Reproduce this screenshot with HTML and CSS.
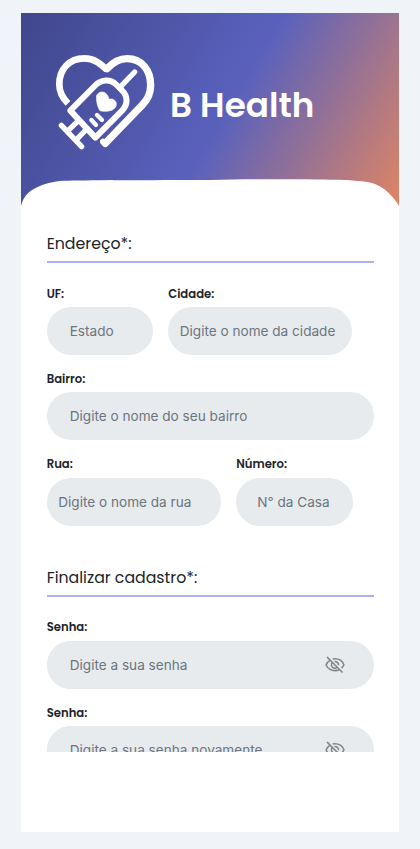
FILE: index.html
```html
<!DOCTYPE html>
<html lang="pt-BR">
<head>
<meta charset="utf-8">
<meta name="viewport" content="width=device-width, initial-scale=1">
<title>B Health</title>
<link rel="stylesheet" href="styles.css">
</head>
<body>
<main class="screen">
  <header class="hero">
    <div class="brand">
      <svg class="logo" viewBox="42 36 306 296" fill="none" stroke="#fff" stroke-linecap="round" stroke-linejoin="round" aria-hidden="true">
        <path stroke-width="20" stroke-linecap="butt" d="M84 190C69 175 58 158 58 134C57 88 88 55 133 55C164 55 184 73 201 90"/>
        <path stroke-width="22" d="M201 86C220 66 239 56 261 56C307 56 332 92 332 136C332 161 321 181 308 194L196 310"/>
        <path stroke-width="18" d="M189 305L196 312"/>
        <path stroke-width="18" d="M91 212L164 138C185 117 212 117 230 135L246 151C264 168 264 194 247 211L166 293Z"/>
        <path stroke-width="16" d="M239 143L284 96M64 256L125 320M113 244L88 268M137 270L113 295"/>
        <path stroke-width="13" d="M154 240L168 255M171 225L186 240"/>
        <path fill="#fff" stroke-width="2" d="M170 168C173 154 192 152 200 163C205 169 206 174 207 178C220 174 230 183 229 194C228 203 220 210 210 212C199 215 189 214 180 212C174 203 168 186 170 168Z"/>
      </svg>
      <h1 class="name">B Health</h1>
    </div>
    <svg class="curve" viewBox="0 0 378 30" aria-hidden="true">
      <path fill="#fff" d="M0 30V27C2 19 6 14 11 11C19 6 29 3 39 2C58 1 100 1.3 190 1C230 0 290 0 325 1C337 2 346 2 354 5C364 9 372 17 378 27V30Z"/>
    </svg>
  </header>

  <form class="form">
    <section class="group">
      <h2 class="title">Endereço*:</h2>
      <div class="row">
        <label class="field uf"><span class="label">UF:</span><input type="text" placeholder="Estado"></label>
        <label class="field city snug"><span class="label">Cidade:</span><input type="text" placeholder="Digite o nome da cidade"></label>
      </div>
      <label class="field"><span class="label">Bairro:</span><input type="text" placeholder="Digite o nome do seu bairro"></label>
      <div class="row">
        <label class="field street snug"><span class="label">Rua:</span><input type="text" placeholder="Digite o nome da rua"></label>
        <label class="field number"><span class="label">Número:</span><input type="text" placeholder="N° da Casa"></label>
      </div>
    </section>
    <section class="group">
      <h2 class="title">Finalizar cadastro*:</h2>
      <label class="field"><span class="label">Senha:</span>
        <span class="password"><input type="text" placeholder="Digite a sua senha">
          <svg class="eye" viewBox="0 0 20 18"><path d="M5.4 4.1C3.4 5.1 1.9 6.7 1.1 9C2.7 12.5 6 14.6 10 14.6C11.8 14.6 13.2 14.2 14.5 13.5M7.7 3.1C8.4 2.9 9.2 2.8 10 2.8C14.1 2.8 17.4 5.2 18.9 8.7C18.3 10.1 17.5 11.2 16.5 12.1M7.2 6.4C6 8 6.3 10.2 7.7 11.3C9 12.4 10.8 12.4 12.1 11.4M9.5 5.5C11.7 5.2 13.7 7 13.5 9.2M2 1L17.5 16.5"/></svg>
        </span>
      </label>
      <label class="field"><span class="label">Senha:</span>
        <span class="password"><input type="text" placeholder="Digite a sua senha novamente">
          <svg class="eye" viewBox="0 0 20 18"><path d="M5.4 4.1C3.4 5.1 1.9 6.7 1.1 9C2.7 12.5 6 14.6 10 14.6C11.8 14.6 13.2 14.2 14.5 13.5M7.7 3.1C8.4 2.9 9.2 2.8 10 2.8C14.1 2.8 17.4 5.2 18.9 8.7C18.3 10.1 17.5 11.2 16.5 12.1M7.2 6.4C6 8 6.3 10.2 7.7 11.3C9 12.4 10.8 12.4 12.1 11.4M9.5 5.5C11.7 5.2 13.7 7 13.5 9.2M2 1L17.5 16.5"/></svg>
        </span>
      </label>
    </section>
  </form>
</main>
</body>
</html>
```
FILE: styles.css
```css
* { box-sizing: border-box; }
body {
  margin: 0;
  height: 849px;
  overflow: hidden;
  padding: 13px 21px 17px;
  background: #f0f4f9;
  color: #202429;
  font-family: Poppins, Inter, sans-serif;
}
.screen { height: 819px; background: #fff; }
.hero {
  height: 195px;
  display: flex;
  flex-direction: column;
  justify-content: space-between;
  background: linear-gradient(120deg, #40478c 0%, #5961bd 53.5%, #e08563 100%);
}
.brand { display: flex; padding: 39px 0 0 33px; }
.logo { width: 102px; height: 98.67px; flex: none; }
.name {
  margin: 30px 0 0 14px;
  color: #fff;
  font-size: 34.2px;
  line-height: 46px;
  font-weight: 600;
  white-space: nowrap;
}
.curve { display: block; width: 378px; height: 30px; margin-bottom: -1px; }
.form { height: 544px; padding: 21px 25px 0 25.7px; overflow: hidden; }
.group { display: flow-root; }
.group + .group { margin-top: 37px; }
.title {
  height: 34px;
  margin: 0 0 22.7px;
  border-bottom: 2px solid #adb1f0;
  font-size: 15.75px;
  line-height: 29px;
  font-weight: 400;
}
.row { display: flex; gap: 15px; }
.field { display: block; height: 69.3px; margin-bottom: 16px; }
.group > :last-child, .group > .row:last-child .field { margin-bottom: 0; }
.uf { width: 106.5px; }
.city { width: 184px; }
.street { width: 174.5px; }
.number { width: 116.5px; }
.label {
  display: block;
  height: 21.3px;
  font-size: 11.65px;
  line-height: 16px;
  font-weight: 600;
}
input {
  display: block;
  width: 100%;
  height: 48px;
  border: 0;
  border-radius: 24px;
  padding: 0 23px;
  background: #e8ebee;
  color: #6b757d;
  font: 400 13.6px/20px Inter, sans-serif;
}
input::placeholder { color: #6b757d; opacity: 1; }
.snug input { padding: 0 11.5px; }
.number input { padding: 0 21px; }
.password { display: flex; align-items: center; border-radius: 24px; background: #e8ebee; }
.password input { flex: 1; padding-right: 0; }
.eye { width: 20px; height: 18px; margin: 0 29px 0 0; fill: none; stroke: #858585; stroke-width: 1.6; }
```
